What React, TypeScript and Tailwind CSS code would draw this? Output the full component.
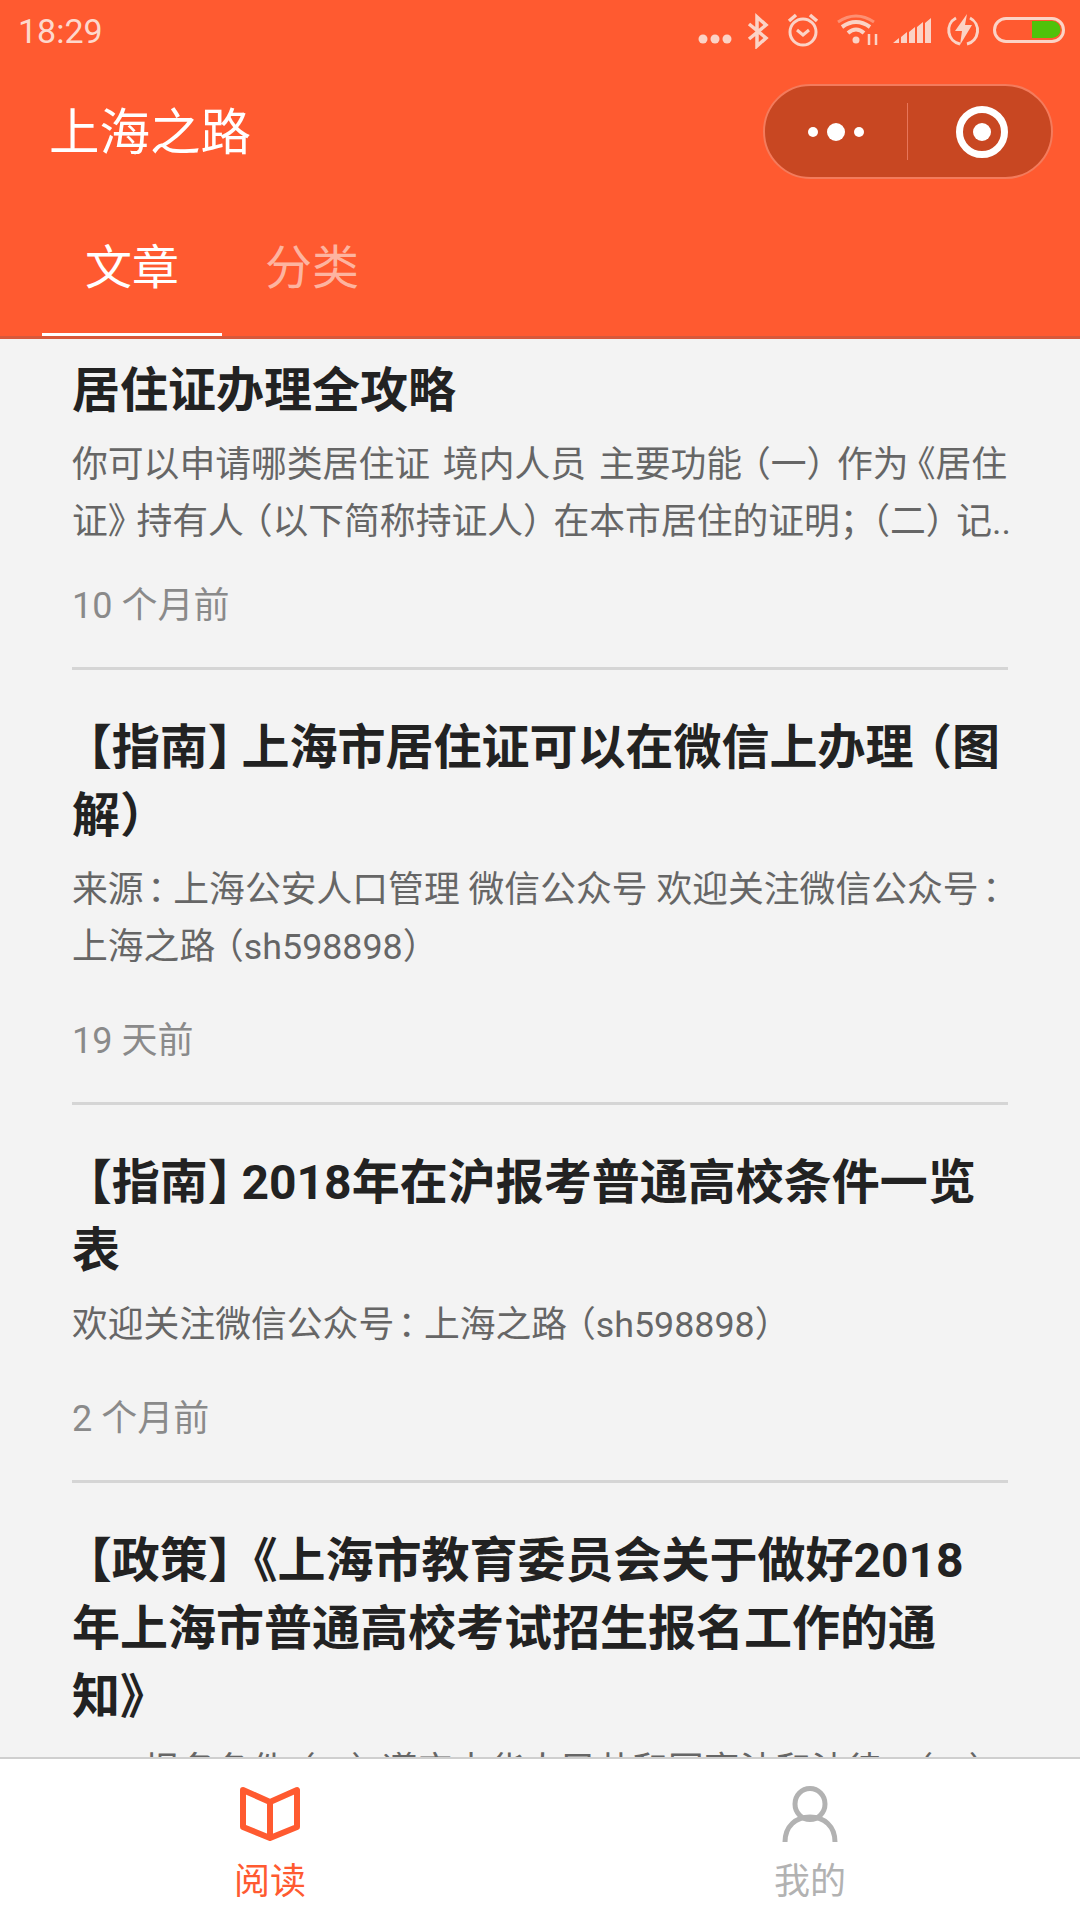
const articles = [
  {
    title: '居住证办理全攻略',
    desc: '你可以申请哪类居住证 境内人员 主要功能（一）作为《居住\n证》持有人（以下简称持证人）在本市居住的证明；（二）记..',
    time: '10 个月前',
    tight: true,
  },
  {
    title: '【指南】上海市居住证可以在微信上办理（图\n解）',
    desc: '来源：上海公安人口管理 微信公众号 欢迎关注微信公众号：\n上海之路（sh598898）',
    time: '19 天前',
  },
  {
    title: '【指南】2018年在沪报考普通高校条件一览\n表',
    desc: '欢迎关注微信公众号：上海之路（sh598898）',
    time: '2 个月前',
  },
  {
    title: '【政策】《上海市教育委员会关于做好2018\n年上海市普通高校考试招生报名工作的通\n知》',
    desc: '一、报名条件（一）遵守中华人民共和国宪法和法律；（二）',
    time: '',
  },
];

// the phone's font sets this punctuation narrower than a full em
const trims: Record<string, string> = {
  '【': 'ml-[-0.17em]',
  '】': 'tracking-[-0.3em]',
  '《': 'ml-[-0.25em]',
  '》': 'tracking-[-0.2em]',
  '（': 'ml-[-0.2em]',
  '）': 'tracking-[-0.15em]',
  '：': 'ml-[0.1em] tracking-[-0.27em]',
  '；': 'tracking-[-0.4em]',
};

function Trimmed({ text }: { text: string }) {
  return (
    <>
      {text.split(/([【】《》（）：；])/).map((part, i) =>
        i % 2 === 1 ? <span key={i} className={trims[part]}>{part}</span> : part,
      )}
    </>
  );
}

function StatusIcons() {
  return (
    <svg width="372" height="36" viewBox="0 0 372 36" className="text-[#fbd3c6]">
      {/* dots */}
      <circle cx="10" cy="26" r="4.5" fill="currentColor" />
      <circle cx="22" cy="26" r="4.5" fill="currentColor" />
      <circle cx="34" cy="26" r="4.5" fill="currentColor" />
      {/* bluetooth */}
      <path d="M56 11 L73 25 L64 33 V4 L73 12 L56 26" fill="none" stroke="currentColor" strokeWidth="3.5" />
      {/* alarm */}
      <circle cx="110" cy="19" r="13" fill="none" stroke="currentColor" strokeWidth="3" />
      <path d="M104 17 L110 22 L116 17" fill="none" stroke="currentColor" strokeWidth="3" />
      <path d="M96 8 L103 2 M124 8 L117 2" stroke="currentColor" strokeWidth="3.5" />
      {/* wifi */}
      <path d="M145 9 Q163 -3 181 9" fill="none" stroke="currentColor" strokeWidth="3" opacity="0.45" />
      <path d="M149 14 Q163 4 177 14" fill="none" stroke="currentColor" strokeWidth="4" />
      <path d="M155 20 Q163 13 171 20" fill="none" stroke="currentColor" strokeWidth="4" />
      <circle cx="163" cy="27" r="3.5" fill="currentColor" />
      <path d="M176 32 V21 M183 32 V21" stroke="currentColor" strokeWidth="2.5" />
      {/* signal */}
      <path d="M200 30 h6 v-5 l-6 5 Z M208 30 h6 v-11 l-6 5 Z M216 30 h6 v-16 l-6 5 Z M224 30 h6 v-21 l-6 5 Z M232 30 h6 v-25 l-6 5 Z" fill="currentColor" />
      {/* charging */}
      <path d="M263 5 A14 14 0 0 0 267 31 M277 5 A14 14 0 0 1 274 31" fill="none" stroke="currentColor" strokeWidth="3" />
      <path d="M274 1 L262 18 H269 L267 32 L279 12 H272 Z" fill="currentColor" />
      {/* battery */}
      <rect x="301.5" y="5.5" width="69" height="23" rx="11.5" fill="none" stroke="currentColor" strokeWidth="3" />
      <path d="M339 8 H359 A8.5 8.5 0 0 1 359 25 H339 Z" fill="#4fc20a" />
    </svg>
  );
}

function BookIcon() {
  return (
    <svg width="60" height="56" viewBox="0 0 60 56" fill="none" stroke="#ff5a30" strokeWidth="6" strokeLinejoin="round">
      <path d="M3 4 L30 16 L57 4 V41 L30 52 L3 41 Z" />
      <path d="M30 16 V52" />
    </svg>
  );
}

function PersonIcon() {
  return (
    <svg width="56" height="56" viewBox="0 0 56 56" fill="none" stroke="#b2b2b2" strokeWidth="5">
      <ellipse cx="28" cy="18" rx="15" ry="15.5" />
      <path d="M3 56 C3 40 14 31 28 31 C42 31 53 40 53 56" />
    </svg>
  );
}

export default function App() {
  return (
    <div className="w-[1080px] h-[1920px] flex flex-col overflow-hidden bg-[#f3f3f3] [text-spacing-trim:space-all] font-['Roboto','Noto_Sans_CJK_SC',sans-serif]">
      <header className="bg-[#ff5a30] border-b-[3px] border-[#d8583a] h-[339px] shrink-0 flex flex-col">
        <div className="h-[62px] pl-[18px] pr-[15px] flex items-center justify-between">
          <span className="text-[34px] leading-none text-[#fdd8cc]">18:29</span>
          <StatusIcons />
        </div>
        <div className="flex items-center justify-between pl-[49px] pr-[27px] h-[95px] mt-[22px]">
          <h1 className="text-[50.5px] leading-none text-white pt-[4px]">上海之路</h1>
          <div className="w-[290px] h-[95px] rounded-full bg-[#c84722] border-2 border-[#f47b5c] flex items-center">
            <div className="w-[142px] flex items-center justify-center gap-[9px]">
              <span className="w-[10px] h-[10px] rounded-full bg-white" />
              <span className="w-[18px] h-[18px] rounded-full bg-white" />
              <span className="w-[10px] h-[10px] rounded-full bg-white" />
            </div>
            <div className="w-[1px] h-[57px] bg-[#e8755a]" />
            <div className="flex-1 flex items-center justify-center pl-[4px]">
              <div className="w-[52px] h-[52px] rounded-full border-[7px] border-white flex items-center justify-center">
                <span className="w-[18px] h-[18px] rounded-full bg-white" />
              </div>
            </div>
          </div>
        </div>
        <nav className="flex pl-[42px] mt-auto">
          <div className="w-[180px] h-[94px] flex items-center justify-center text-[47px] text-white border-b-[3px] border-white pb-[38px]">文章</div>
          <div className="w-[180px] h-[94px] flex items-center justify-center text-[47px] text-[#fdb4a0] pb-[41px]">分类</div>
        </nav>
      </header>

      <main className="flex-1 min-h-0 overflow-hidden pt-[18px]">
        {articles.map((a, i) => (
          <article key={i} className="mx-[72px] pb-[36px] border-b-[3px] border-[#d5d5d5] [&:not(:first-child)]:pt-[44px]">
            <h2 className="text-[48px] leading-[68px] font-bold text-[#222222] whitespace-pre">
              <Trimmed text={a.title} />
            </h2>
            <p className={a.tight ? 'mt-[12px] text-[35.8px] leading-[57px] text-[#666666] whitespace-pre [word-spacing:4px]' : 'mt-[12px] text-[35.8px] leading-[57px] text-[#666666] whitespace-pre'}>
              <Trimmed text={a.desc} />
            </p>
            <p className={a.tight ? 'mt-[30px] text-[36px] leading-[50px] text-[#8a8a8a]' : 'mt-[40px] text-[36px] leading-[50px] text-[#8a8a8a]'}>{a.time}</p>
          </article>
        ))}
      </main>

      <footer className="h-[163px] shrink-0 bg-white border-t-2 border-[#cfcfcf] flex">
        <div className="flex-1 flex flex-col items-center pt-[27px]">
          <BookIcon />
          <span className="mt-[18px] text-[36px] leading-[44px] text-[#ff5a30]">阅读</span>
        </div>
        <div className="flex-1 flex flex-col items-center pt-[27px]">
          <PersonIcon />
          <span className="mt-[18px] text-[36px] leading-[44px] text-[#b2b2b2]">我的</span>
        </div>
      </footer>
    </div>
  );
}
